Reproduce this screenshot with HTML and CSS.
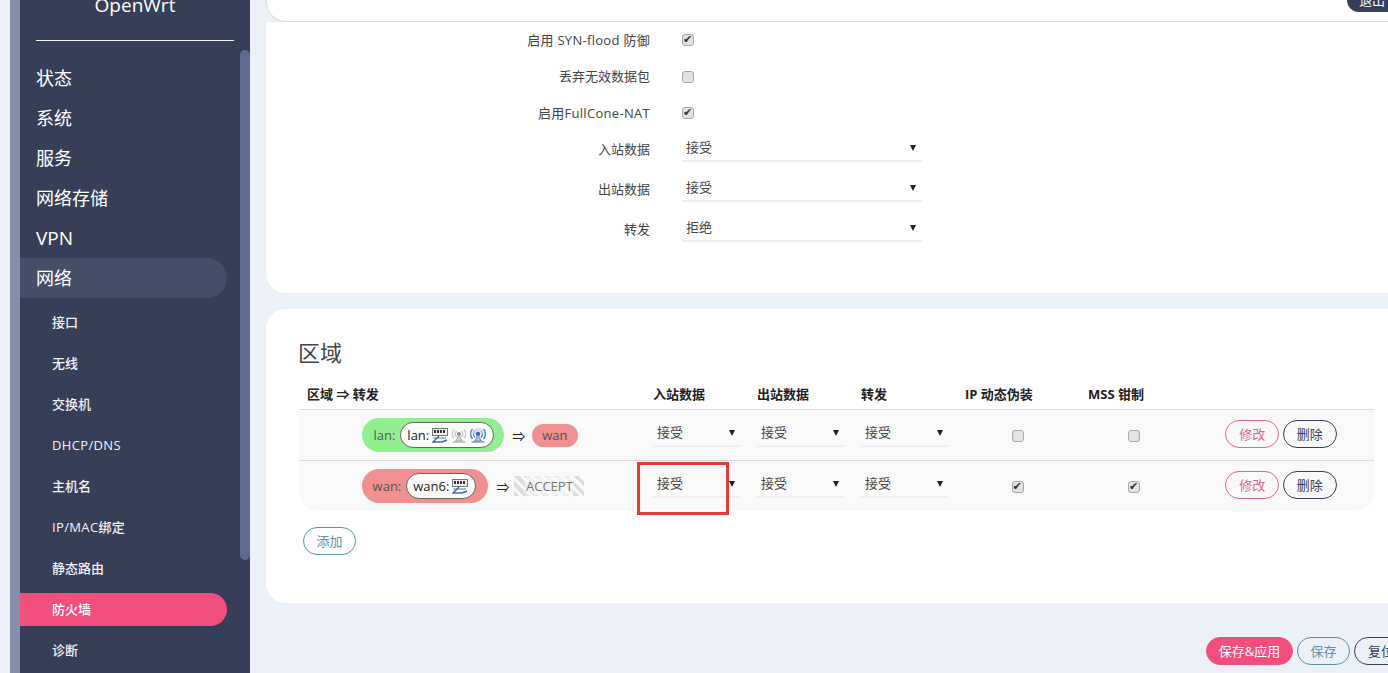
FILE: index.html
```html
<!DOCTYPE html>
<html lang="zh-CN">

<head>
  <meta charset="UTF-8">
  <title>OpenWrt - 防火墙</title>
  <link rel="stylesheet" href="styles.css">
</head>

<body>
  <svg class="defs" width="0" height="0">
    <symbol id="ico-switch" viewBox="0 0 16 16">
      <rect x="0.5" y="1.5" width="15" height="7" fill="#eee" stroke="#777"/>
      <path d="M2 3h2v3H2zM5 3h2v3H5zM8 3h2v3H8zM11 3h2v3h-2z" fill="#333"/>
      <path d="M1 11h13" stroke="#88a4d8" stroke-width="1.5"/>
      <path d="M7 9 3 13 1 15h9l5-2" fill="none" stroke="#3c68b8" stroke-width="1.5"/>
    </symbol>
    <symbol id="ico-wifi-off" viewBox="0 0 16 16">
      <path d="M3 2.500a7 7 0 0 0 0 9M13 2.500a7 7 0 0 1 0 9M5.500 4a4.500 4.500 0 0 0 0 6M10.500 4a4.500 4.500 0 0 1 0 6" fill="none" stroke="#c8c8c8" stroke-width="1.5"/>
      <circle cx="8" cy="7" r="2" fill="#8f8f8f"/>
      <path d="M8 8 4.500 14h7z" fill="#d0d0d0" stroke="#a0a0a0" stroke-width=".8"/>
      <path d="M1.500 15h13" stroke="#b4b4b4" stroke-width="1.400"/>
    </symbol>
    <symbol id="ico-wifi" viewBox="0 0 16 16">
      <path d="M2.500 2a7.500 7.500 0 0 0 0 10M13.500 2a7.500 7.500 0 0 1 0 10M5 3.500a5 5 0 0 0 0 7M11 3.500a5 5 0 0 1 0 7" fill="none" stroke="#5b8ad0" stroke-width="1.600"/>
      <path d="M2 7a6 6 0 0 1 12 0" fill="#c3d6f0" opacity=".7"/>
      <circle cx="8" cy="7" r="2.200" fill="#3a66b0"/>
      <path d="M8 8 4.500 14h7z" fill="#a9c0e6" stroke="#5a7fb8" stroke-width=".8"/>
      <path d="M1.500 15h13" stroke="#7d8fa8" stroke-width="1.400"/>
    </symbol>
  </svg>

  <div class="gutter"></div>

  <aside class="sidebar">
    <div class="brand">OpenWrt</div>
    <ul class="menu">
      <li class="menu-item">状态</li>
      <li class="menu-item">系统</li>
      <li class="menu-item">服务</li>
      <li class="menu-item">网络存储</li>
      <li class="menu-item menu-latin">VPN</li>
      <li class="menu-item menu-open">网络</li>
    </ul>
    <ul class="submenu">
      <li>接口</li>
      <li>无线</li>
      <li>交换机</li>
      <li class="sub-latin">DHCP/DNS</li>
      <li>主机名</li>
      <li class="sub-latin">IP/MAC绑定</li>
      <li>静态路由</li>
      <li class="active">防火墙</li>
      <li>诊断</li>
    </ul>
    <div class="scrollbar"></div>
  </aside>

  <main class="main">
    <header class="topbar">
      <span class="logout">退出</span>
    </header>

    <section class="card form-card">
      <div class="row">
        <label class="row-label label-latin">启用 SYN-flood 防御</label>
        <input type="checkbox" checked>
      </div>
      <div class="row">
        <label class="row-label">丢弃无效数据包</label>
        <input type="checkbox">
      </div>
      <div class="row">
        <label class="row-label label-latin">启用FullCone-NAT</label>
        <input type="checkbox" checked>
      </div>
      <div class="row row-select row-first-select">
        <label class="row-label">入站数据</label>
        <div class="select">接受</div>
      </div>
      <div class="row row-select">
        <label class="row-label">出站数据</label>
        <div class="select">接受</div>
      </div>
      <div class="row row-select">
        <label class="row-label">转发</label>
        <div class="select">拒绝</div>
      </div>
    </section>

    <section class="card zones-card">
      <h2 class="card-title">区域</h2>
      <table class="zones">
        <thead>
          <tr>
            <th class="col-zone">区域 ⇒ 转发</th>
            <th class="col-policy">入站数据</th>
            <th class="col-policy">出站数据</th>
            <th class="col-policy">转发</th>
            <th class="col-masq">IP 动态伪装</th>
            <th class="col-mss">MSS 钳制</th>
            <th></th>
          </tr>
        </thead>
        <tbody>
          <tr>
            <td>
              <div class="zone-flow">
                <div class="zone zone-lan">
                  <span>lan:</span>
                  <span class="net">lan:
                    <svg class="ico"><use href="#ico-switch"/></svg>
                    <svg class="ico"><use href="#ico-wifi-off"/></svg>
                    <svg class="ico"><use href="#ico-wifi"/></svg>
                  </span>
                </div>
                <span class="arrow">⇒</span>
                <span class="zone-target">wan</span>
              </div>
            </td>
            <td><div class="select">接受</div></td>
            <td><div class="select">接受</div></td>
            <td><div class="select">接受</div></td>
            <td class="center"><input type="checkbox"></td>
            <td class="center center-mss"><input type="checkbox"></td>
            <td class="actions">
              <button class="btn btn-edit">修改</button>
              <button class="btn btn-del">删除</button>
            </td>
          </tr>
          <tr>
            <td>
              <div class="zone-flow">
                <div class="zone zone-wan">
                  <span>wan:</span>
                  <span class="net">wan6:
                    <svg class="ico"><use href="#ico-switch"/></svg>
                  </span>
                </div>
                <span class="arrow">⇒</span>
                <span class="zone-any"><span>ACCEPT</span></span>
              </div>
            </td>
            <td class="marked">
              <div class="select">接受</div>
              <div class="red-box"></div>
            </td>
            <td><div class="select">接受</div></td>
            <td><div class="select">接受</div></td>
            <td class="center"><input type="checkbox" checked></td>
            <td class="center center-mss"><input type="checkbox" checked></td>
            <td class="actions">
              <button class="btn btn-edit">修改</button>
              <button class="btn btn-del">删除</button>
            </td>
          </tr>
        </tbody>
      </table>
      <button class="btn btn-add">添加</button>
    </section>

    <footer class="page-actions">
      <button class="btn btn-apply">保存&amp;应用</button>
      <button class="btn btn-add">保存</button>
      <button class="btn btn-del">复位</button>
    </footer>
  </main>
</body>

</html>
```

FILE: styles.css
```css
/* page frame */
html,
body {
  height: 673px;
  overflow: hidden;
}

body {
  margin: 0;
  display: flex;
  background-color: #ecf1f7;
  font-family: "Open Sans", "Noto Sans CJK SC", sans-serif;
  font-size: 13px;
  color: #444;
}

.defs {
  position: absolute;
}

.gutter {
  flex: none;
  width: 10px;
  margin-left: 10px;
  background-color: #8490ab;
}

/* sidebar */
.sidebar {
  position: relative;
  flex: none;
  width: 230px;
  height: 673px;
  overflow: hidden;
  background-color: #373f57;
  color: #fff;
}

.brand {
  height: 40px;
  margin: 0 16px;
  border-bottom: 1px solid #f4f4f4;
  text-align: center;
  font-size: 19px;
  line-height: 10px;
}

.menu,
.submenu {
  list-style: none;
  margin: 0;
  padding: 0;
}

.menu {
  margin-top: 17px;
}

.menu-item {
  width: 191px;
  height: 40px;
  padding-left: 16px;
  font-size: 18px;
  line-height: 40px;
}

.menu-latin {
  font-size: 19px;
}

.menu-open {
  background-color: #464f68;
  border-radius: 0 20px 20px 0;
}

.submenu li {
  width: 175px;
  height: 33px;
  margin-top: 8px;
  padding-left: 32px;
  line-height: 33px;
  font-weight: 500;
  color: #f2f2f2;
}

.submenu .sub-latin {
  letter-spacing: 0.35px;
}

.submenu .active {
  background-color: #f34f7e;
  border-radius: 0 17px 17px 0;
  color: #fff;
}

.scrollbar {
  position: absolute;
  top: 50px;
  right: 0;
  width: 10px;
  height: 510px;
  background-color: #5e6c94;
  border-radius: 5px;
}

/* main column */
.main {
  flex: none;
  width: 1142px;
  margin-left: 16px;
}

.topbar {
  position: relative;
  height: 41px;
  margin-top: -20px;
  background-color: #fff;
  border: 1px solid #ddd;
  border-top: none;
  border-right: none;
  border-radius: 0 0 0 20px;
}

.logout {
  position: absolute;
  top: 8px;
  left: 1080px;
  width: 60px;
  height: 24px;
  padding-left: 12px;
  background-color: #373f57;
  border-radius: 12px 0 0 12px;
  color: #fff;
  line-height: 24px;
}

.card {
  background-color: #fff;
  border-radius: 0 0 0 20px;
}

.form-card {
  height: 271px;
}

.row {
  display: flex;
  align-items: center;
  height: 36.5px;
}

.row-select {
  height: 40px;
}

.row-first-select {
  margin-top: -2.5px;
}

.row-label {
  flex: none;
  width: 384px;
  margin-right: 32px;
  padding-bottom: 2px;
  text-align: right;
}

.label-latin {
  letter-spacing: 0.3px;
}

input[type="checkbox"] {
  position: relative;
  appearance: none;
  flex: none;
  width: 12px;
  height: 12px;
  margin: 0;
  background-color: #e2e2e2;
  border: 1px solid #aaa;
  border-radius: 3px;
}

input[type="checkbox"]:checked::after {
  content: "✔";
  position: absolute;
  top: -1px;
  left: 0;
  font-family: "DejaVu Sans", sans-serif;
  font-size: 11px;
  line-height: 12px;
  color: #333;
}

.select {
  position: relative;
  width: 236px;
  height: 24px;
  padding-left: 4px;
  border-bottom: 2px solid #eee;
  line-height: 22px;
  color: #444;
}

.select::after {
  content: "";
  position: absolute;
  top: 9px;
  right: 6px;
  border-top: 6px solid #222;
  border-left: 3px solid transparent;
  border-right: 3px solid transparent;
}

/* zones table */
.zones-card {
  position: relative;
  height: 294px;
  margin-top: 16px;
  padding-left: 33px;
  border-radius: 20px 0 0 20px;
}

.card-title {
  margin: 0;
  margin-left: -1px;
  padding-top: 28px;
  height: 48px;
  font-size: 22px;
  font-weight: 400;
  line-height: 30px;
}

.zones {
  width: 1075px;
  border-collapse: collapse;
  table-layout: fixed;
}

.zones th {
  height: 18px;
  padding: 0 0 6px 8px;
  border-bottom: 1px solid #ddd;
  text-align: left;
  font-weight: 700;
  line-height: 18px;
  color: #222;
}

.col-zone {
  width: 338px;
}

.col-policy {
  width: 96px;
}

.col-masq {
  width: 115px;
}

.col-mss {
  width: 100px;
}

.zones td {
  height: 50px;
  padding: 0 0 0 8px;
  background-color: #f9f9f9;
  border-top: 1px solid #ddd;
}

.zones tbody tr:first-child td {
  border-top: none;
}

.zones tbody tr:last-child td:first-child {
  border-radius: 0 0 0 20px;
}

.zones tbody tr:last-child td:last-child {
  border-radius: 0 0 20px 0;
}

.zones .center {
  padding: 0 2px 0 0;
  text-align: center;
}

.zones .center-mss {
  padding-right: 0;
}

.zones .center input {
  display: inline-block;
  vertical-align: middle;
  margin-bottom: 2px;
}

.zones .select {
  width: 84px;
  margin-bottom: 2px;
}

.zones .actions {
  padding-left: 0;
  text-align: center;
}

.zones .actions .btn {
  margin-bottom: 2px;
}

.marked {
  position: relative;
}

.red-box {
  position: absolute;
  top: 1px;
  left: -8px;
  width: 86px;
  height: 47px;
  border: 3px solid #e83a3a;
}

.zone-flow {
  display: flex;
  align-items: center;
  justify-content: center;
  margin-left: -8px;
}

.zone {
  display: flex;
  align-items: center;
  gap: 5px;
  height: 34px;
  padding: 0 10px 0 11px;
  border-radius: 17px;
  color: #555;
}

.zone-lan {
  background-color: #90f090;
}

.zone-wan {
  margin-left: 2px;
  padding: 0 12px 0 11px;
  background-color: #f09090;
}

.net {
  display: flex;
  align-items: center;
  gap: 3px;
  height: 24px;
  padding: 0 7px 0 6px;
  background-color: #fff;
  border: 1px solid #666;
  border-radius: 13px;
  color: #222;
}

.ico {
  width: 16px;
  height: 16px;
}

.arrow {
  margin: 0 7px 0 8px;
  color: #222;
}

.zone-target {
  height: 23px;
  margin-right: 4px;
  padding: 0 10px;
  background-color: #f09090;
  border-radius: 12px;
  color: #555;
  line-height: 22px;
}

.zone-any {
  display: flex;
  align-items: center;
  justify-content: center;
  width: 70px;
  height: 20px;
  margin-left: -2px;
  background: repeating-linear-gradient(45deg, #dcdcdc 0 4px, transparent 4px 7px);
  color: #777;
}

.zone-any span {
  background-color: rgba(249, 249, 249, 0.7);
  box-shadow: 0 0 4px #f9f9f9;
  line-height: 18px;
}

/* buttons */
.btn {
  height: 28px;
  padding: 0;
  background-color: transparent;
  border: 1px solid #ccc;
  border-radius: 14px;
  font-family: inherit;
  font-size: 13px;
  line-height: 24px;
  white-space: nowrap;
  cursor: pointer;
}

.btn-edit {
  width: 54px;
  border-color: #e0668f;
  color: #e0668f;
}

.btn-del {
  width: 54px;
  border-color: #373f57;
  color: #373f57;
}

.btn-add {
  width: 53px;
  border-color: #5a94a8;
  color: #5a94a8;
}

.btn-apply {
  width: 87px;
  background-color: #f34f7e;
  border-color: #f34f7e;
  color: #fff;
}

.zones-card > .btn-add {
  margin: 16px 0 0 4px;
}

.page-actions {
  display: flex;
  justify-content: flex-end;
  gap: 4px;
  margin-top: 34px;
}
```
